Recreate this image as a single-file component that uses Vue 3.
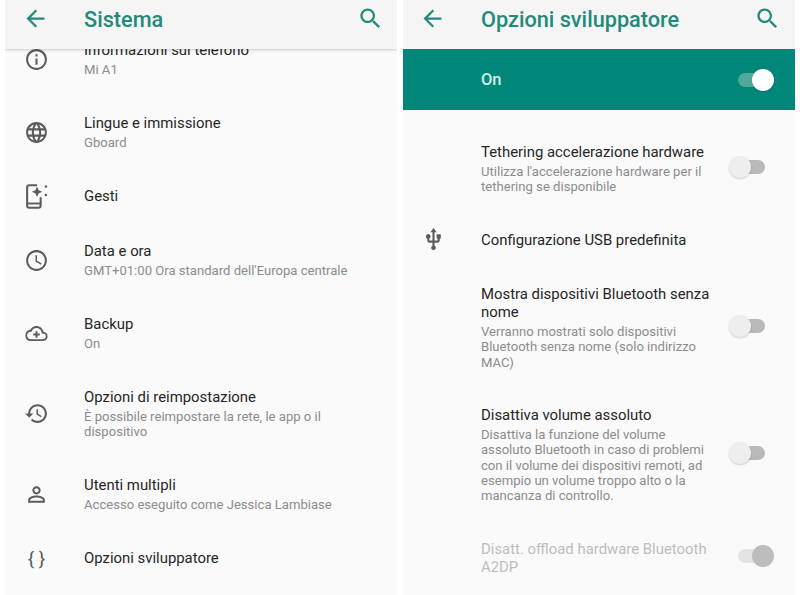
<template>
  <div class="page">
    <!-- Sistema -->
    <section class="panel panel-left">
      <header class="topbar topbar-shadow">
        <svg class="bar-icon" viewBox="0 0 24 24"><path :d="icons.back" /></svg>
        <h1 class="bar-title">Sistema</h1>
        <svg class="bar-icon" viewBox="0 0 24 24"><path :d="icons.search" /></svg>
      </header>
      <ul class="list list-system">
        <li v-for="row in systemRows" :key="row.title" class="row">
          <span v-if="row.braces" class="icon braces">{ }</span>
          <svg v-else-if="row.gesture" class="icon" viewBox="0 0 24 24">
            <path class="outline" d="M12.5 1.2H5.2C4 1.2 3 2.2 3 3.4v17.2c0 1.2 1 2.2 2.2 2.2h8.6c1.2 0 2.200-1 2.200-2.200v-7.800" />
            <path d="M3 17.800h13v1.800H3z" />
            <path d="M12.500 2.500l1.500 3.500 3.500 1.500-3.500 1.500-1.500 3.500-1.500-3.500-3.500-1.500 3.500-1.500z" />
            <circle cx="21" cy="2.500" r="1.200" />
            <circle cx="21" cy="10.500" r="1.200" />
          </svg>
          <svg v-else class="icon" :class="{ 'icon-small': row.small }" viewBox="0 0 24 24"><path :d="row.icon" /></svg>
          <div class="texts">
            <div class="title">{{ row.title }}</div>
            <div v-if="row.sub" class="sub">{{ row.sub }}</div>
          </div>
        </li>
      </ul>
    </section>

    <!-- Opzioni sviluppatore -->
    <section class="panel panel-right">
      <header class="topbar">
        <svg class="bar-icon" viewBox="0 0 24 24"><path :d="icons.back" /></svg>
        <h1 class="bar-title">Opzioni sviluppatore</h1>
        <svg class="bar-icon" viewBox="0 0 24 24"><path :d="icons.search" /></svg>
      </header>
      <div class="master">
        <span class="master-label">On</span>
        <span class="toggle toggle-master"><i class="thumb"></i></span>
      </div>
      <ul class="list list-dev">
        <li v-for="row in devRows" :key="row.title" class="row" :class="{ disabled: row.disabled }">
          <svg v-if="row.icon" class="icon" viewBox="0 0 24 24"><path :d="row.icon" /></svg>
          <span v-else class="icon"></span>
          <div class="texts">
            <div class="title">{{ row.title }}</div>
            <div v-if="row.sub" class="sub">{{ row.sub }}</div>
          </div>
          <span v-if="row.toggle" class="toggle" :class="row.toggle"><i class="thumb"></i></span>
        </li>
      </ul>
    </section>
  </div>
</template>

<script setup>
// Material icons
const icons = {
  back: 'M20 11H7.83l5.59-5.59L12 4l-8 8 8 8 1.41-1.41L7.83 13H20v-2z',
  search: 'M15.5 14h-.79l-.28-.27C15.41 12.59 16 11.11 16 9.5 16 5.91 13.09 3 9.5 3S3 5.91 3 9.5 5.91 16 9.5 16c1.61 0 3.09-.59 4.23-1.57l.27.28v.79l5 4.99L20.49 19l-4.99-5zm-6 0C7.01 14 5 11.99 5 9.5S7.01 5 9.5 5 14 7.01 14 9.5 11.99 14 9.5 14z',
  info: 'M11 7h2v2h-2zm0 4h2v6h-2zm1-9C6.48 2 2 6.48 2 12s4.48 10 10 10 10-4.48 10-10S17.52 2 12 2zm0 18c-4.41 0-8-3.59-8-8s3.59-8 8-8 8 3.59 8 8-3.59 8-8 8z',
  globe: 'M11.99 2C6.47 2 2 6.48 2 12s4.47 10 9.99 10C17.52 22 22 17.52 22 12S17.52 2 11.99 2zm6.93 6h-2.95c-.32-1.25-.78-2.45-1.38-3.56 1.84.63 3.37 1.91 4.33 3.56zM12 4.04c.83 1.2 1.48 2.53 1.91 3.96h-3.82c.43-1.43 1.08-2.76 1.91-3.96zM4.26 14C4.1 13.36 4 12.69 4 12s.1-1.36.26-2h3.38c-.08.66-.14 1.32-.14 2 0 .68.06 1.34.14 2H4.26zm.82 2h2.95c.32 1.25.78 2.45 1.38 3.56-1.84-.63-3.37-1.9-4.33-3.56zm2.95-8H5.08c.96-1.66 2.49-2.93 4.33-3.56C8.81 5.55 8.35 6.75 8.03 8zM12 19.96c-.83-1.2-1.48-2.53-1.91-3.96h3.82c-.43 1.43-1.08 2.76-1.91 3.96zM14.34 14H9.66c-.09-.66-.16-1.32-.16-2 0-.68.07-1.35.16-2h4.68c.09.65.16 1.32.16 2 0 .68-.07 1.34-.16 2zm.25 5.56c.6-1.11 1.06-2.31 1.38-3.56h2.95c-.96 1.65-2.49 2.93-4.33 3.56zM16.36 14c.08-.66.14-1.32.14-2 0-.68-.06-1.34-.14-2h3.38c.16.64.26 1.31.26 2s-.1 1.36-.26 2h-3.38z',
  clock: 'M11.99 2C6.47 2 2 6.48 2 12s4.47 10 9.99 10C17.52 22 22 17.52 22 12S17.52 2 11.99 2zM12 20c-4.42 0-8-3.58-8-8s3.58-8 8-8 8 3.58 8 8-3.58 8-8 8zm.5-13H11v6l5.25 3.15.75-1.23-4.5-2.67z',
  backup: 'M19.35 10.04C18.67 6.59 15.64 4 12 4 9.11 4 6.6 5.64 5.35 8.04 2.34 8.36 0 10.91 0 14c0 3.31 2.69 6 6 6h13c2.76 0 5-2.24 5-5 0-2.64-2.05-4.78-4.65-4.96zM19 18H6c-2.21 0-4-1.79-4-4s1.79-4 4-4h.71C7.37 7.69 9.48 6 12 6c3.04 0 5.5 2.46 5.5 5.5v.5H19c1.66 0 3 1.34 3 3s-1.34 3-3 3zM11 9.500h2v2.500h2.500v2H13v2.500h-2V14H8.500v-2H11z',
  history: 'M13 3c-4.97 0-9 4.03-9 9H1l3.89 3.89.07.14L9 12H6c0-3.87 3.13-7 7-7s7 3.13 7 7-3.13 7-7 7c-1.93 0-3.68-.79-4.94-2.06l-1.42 1.42C8.27 19.99 10.51 21 13 21c4.97 0 9-4.03 9-9s-4.03-9-9-9zm-1 5v5l4.28 2.54.72-1.21-3.5-2.08V8H12z',
  person: 'M12 5.9c1.16 0 2.1.94 2.1 2.1s-.94 2.1-2.1 2.1S9.9 9.16 9.9 8s.94-2.1 2.1-2.1m0 9c2.97 0 6.1 1.46 6.1 2.1v1.1H5.9V17c0-.64 3.13-2.1 6.1-2.1M12 4C9.79 4 8 5.79 8 8s1.79 4 4 4 4-1.79 4-4-1.79-4-4-4zm0 9c-2.67 0-8 1.34-8 4v3h16v-3c0-2.66-5.33-4-8-4z',
  usb: 'M15 7v4h1v2h-3V5h2l-3-4-3 4h2v8H8v-2.07c.7-.37 1.2-1.08 1.2-1.93 0-1.21-.99-2.2-2.2-2.2-1.21 0-2.2.99-2.2 2.2 0 .85.5 1.56 1.2 1.93V13c0 1.11.89 2 2 2h3v3.05c-.71.37-1.2 1.1-1.2 1.95 0 1.22.99 2.2 2.2 2.2 1.21 0 2.2-.98 2.2-2.2 0-.85-.49-1.58-1.2-1.95V15h3c1.11 0 2-.89 2-2v-2h1V7h-4z',
};

const systemRows = [
  { icon: icons.info, title: 'Informazioni sul telefono', sub: 'Mi A1' },
  { icon: icons.globe, title: 'Lingue e immissione', sub: 'Gboard' },
  { gesture: true, title: 'Gesti' },
  { icon: icons.clock, title: 'Data e ora', sub: "GMT+01:00 Ora standard dell'Europa centrale" },
  { icon: icons.backup, small: true, title: 'Backup', sub: 'On' },
  { icon: icons.history, title: 'Opzioni di reimpostazione', sub: 'È possibile reimpostare la rete, le app o il dispositivo' },
  { icon: icons.person, title: 'Utenti multipli', sub: 'Accesso eseguito come Jessica Lambiase' },
  { braces: true, title: 'Opzioni sviluppatore' },
];

const devRows = [
  { title: 'Tethering accelerazione hardware', sub: "Utilizza l'accelerazione hardware per il tethering se disponibile", toggle: 'off' },
  { icon: icons.usb, title: 'Configurazione USB predefinita' },
  { title: 'Mostra dispositivi Bluetooth senza nome', sub: 'Verranno mostrati solo dispositivi Bluetooth senza nome (solo indirizzo MAC)', toggle: 'off' },
  { title: 'Disattiva volume assoluto', sub: 'Disattiva la funzione del volume assoluto Bluetooth in caso di problemi con il volume dei dispositivi remoti, ad esempio un volume troppo alto o la mancanza di controllo.', toggle: 'off' },
  { title: 'Disatt. offload hardware Bluetooth A2DP', toggle: 'locked', disabled: true },
];
</script>

<style>
html,
body {
  background: #fff;
}
</style>

<style scoped>
.page {
  display: flex;
  gap: 6px;
  height: 595px;
  padding: 0 5px;
  box-sizing: border-box;
  overflow: hidden;
  font-family: Roboto, "Liberation Sans", sans-serif;
}

.panel {
  width: 392px;
  display: flex;
  flex-direction: column;
  background: #fafafa;
  overflow: hidden;
}

.topbar {
  position: relative;
  z-index: 2;
  flex: none;
  height: 49px;
  display: flex;
  align-items: center;
  padding: 0 13px 12px 17px;
  box-sizing: border-box;
  background: #f5f5f5;
  color: #24897b;
}

.topbar-shadow {
  box-shadow: 0 1px 3px rgba(0, 0, 0, 0.2);
}

.bar-icon {
  flex: none;
  width: 27px;
  height: 27px;
  fill: #24897b;
}

.bar-title {
  flex: 1;
  margin: 2px 0 0 35px;
  font-size: 21.700px;
  font-weight: 500;
  line-height: 27px;
}

.panel-right .topbar {
  padding-left: 16px;
  padding-right: 14px;
}

.master {
  flex: none;
  height: 61px;
  display: flex;
  align-items: center;
  justify-content: space-between;
  padding: 0 30px 0 78px;
  background: #00877a;
}

.master-label {
  color: #d2efe9;
  font-size: 16.500px;
  font-weight: 500;
}

.list {
  list-style: none;
  margin: 0;
  display: flex;
  flex-direction: column;
}

.list-system {
  margin-top: -8px;
  padding: 0 14px 0 19px;
  gap: 37px;
}

.list-dev {
  padding: 33px 30px 0 18px;
  gap: 36.500px;
}

.row {
  display: flex;
  align-items: center;
}

/* icon is taller than a one-line title, must not stretch the row */
.icon {
  flex: none;
  width: 25px;
  height: 25px;
  margin: -4px 35px -4px 0;
  fill: #5c5c5c;
}

.icon-small {
  transform: scale(0.9);
}

.outline {
  fill: none;
  stroke: #5c5c5c;
  stroke-width: 2;
}

.braces {
  color: #5c5c5c;
  font-size: 19px;
  line-height: 25px;
  text-align: center;
  white-space: nowrap;
}

.texts {
  flex: 1;
  min-width: 0;
}

.title {
  color: #262626;
  font-size: 14.900px;
  line-height: 18px;
}

.sub {
  color: #8c8c8c;
  font-size: 13.100px;
  line-height: 15.250px;
  margin-top: 2.750px;
}

.disabled .title {
  color: #bdbdbd;
}

.toggle {
  position: relative;
  flex: none;
  width: 27px;
  height: 14px;
  margin: 0 0 3px 24px;
  border-radius: 7px;
  background: #b9b9b9;
}

.thumb {
  position: absolute;
  top: -4px;
  left: -9px;
  width: 22px;
  height: 22px;
  border-radius: 50%;
  background: #eeeeee;
  box-shadow: 0 1px 2px rgba(0, 0, 0, 0.18);
}

.toggle-master,
.locked {
  background: #e4e4e4;
}

.toggle-master {
  margin: 0;
  background: #4da999;
}

.toggle-master .thumb,
.locked .thumb {
  left: 14px;
}

.toggle-master .thumb {
  background: #fff;
}

.locked .thumb {
  background: #bdbdbd;
  box-shadow: none;
}
</style>
